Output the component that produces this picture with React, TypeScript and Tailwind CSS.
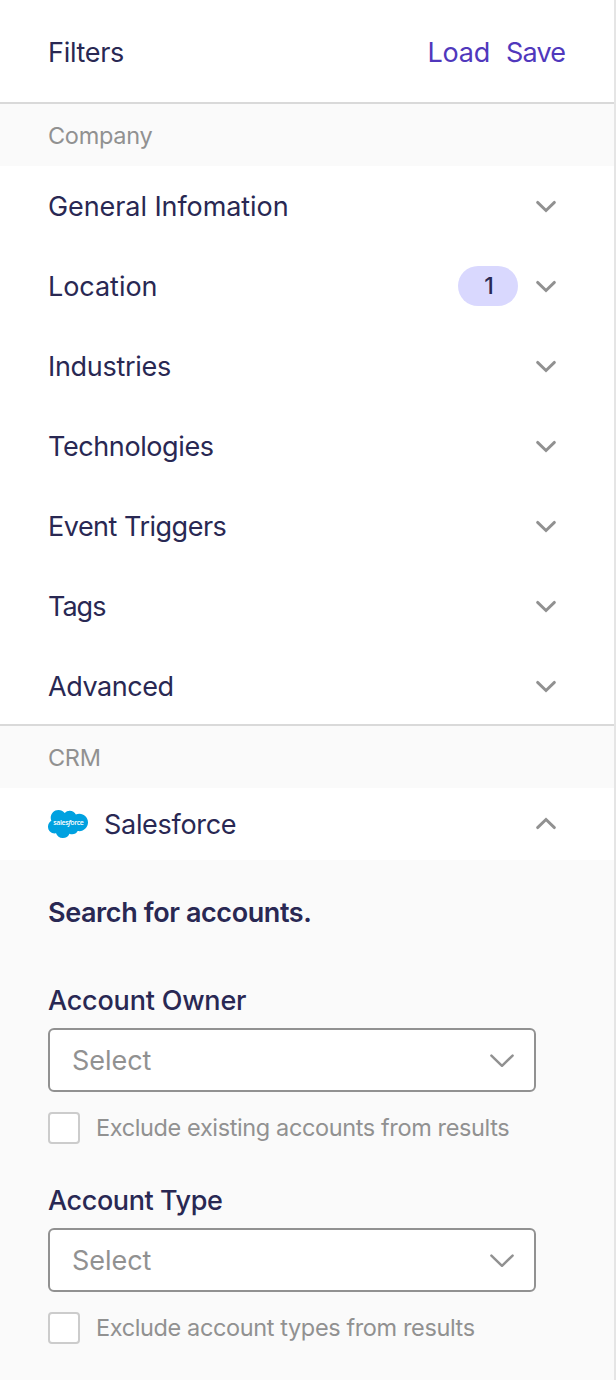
import clsx from "clsx";

const companyFilters = [
  { label: "General Infomation", tracking: "tracking-[-0.08px]" },
  { label: "Location", tracking: "tracking-[-0.05px]", count: 1 },
  { label: "Industries", tracking: "tracking-[-0.3px]" },
  { label: "Technologies", tracking: "tracking-[-0.4px]" },
  { label: "Event Triggers", tracking: "tracking-[-0.5px]" },
  { label: "Tags", tracking: "tracking-[-1px]" },
  { label: "Advanced", tracking: "tracking-[-0.45px]" },
];

const accountFields = [
  {
    label: "Account Owner",
    exclude: "Exclude existing accounts from results",
    tracking: "tracking-[-0.2px]",
  },
  {
    label: "Account Type",
    exclude: "Exclude account types from results",
    tracking: "tracking-[-0.4px]",
  },
];

function Chevron({ up = false }: { up?: boolean }) {
  return (
    <svg
      viewBox="0 0 24 24"
      className={clsx("size-6 fill-none stroke-[#919191] stroke-[2.9]", up && "rotate-180")}
      strokeLinecap="round"
    >
      <path d="M3.6 8.4 12 16.5l8.4-8.1" />
    </svg>
  );
}

function SalesforceLogo() {
  return (
    <svg viewBox="0 0 40 28" className="h-7 w-10">
      <path
        transform="scale(1.6667) translate(0 -3.6)"
        fill="#00a1e0"
        d="M10.006 5.415a4.195 4.195 0 013.045-1.306c1.56 0 2.954.9 3.69 2.205.63-.3 1.35-.45 2.1-.45 2.85 0 5.159 2.34 5.159 5.22s-2.31 5.22-5.176 5.22c-.345 0-.69-.044-1.02-.104a3.75 3.75 0 01-3.3 1.95c-.6 0-1.155-.15-1.65-.375A4.314 4.314 0 018.88 20.4a4.302 4.302 0 01-4.05-2.82c-.27.062-.54.076-.825.076-2.204 0-4.005-1.8-4.005-4.05 0-1.5.811-2.805 2.01-3.51-.255-.57-.39-1.2-.39-1.846 0-2.58 2.1-4.65 4.65-4.65 1.53 0 2.85.705 3.72 1.8"
      />
      <text x="5.3" y="15.2" textLength="30.6" fontSize="7" fontWeight="600" fill="#fff" fontFamily="Open Sans, sans-serif">
        sales<tspan fontStyle="italic">f</tspan>orce
      </text>
    </svg>
  );
}

function SectionHeading({ children }: { children: string }) {
  return (
    <div className="flex h-16 items-center border-t-2 border-[#d9d9d9] bg-[#fafafa] pt-0.5 pl-12">
      <h2 className="text-[23.5px] tracking-[-0.3px] text-[#919191]">{children}</h2>
    </div>
  );
}

export default function App() {
  return (
    <aside className="h-[1380px] w-[616px] overflow-hidden border-r-2 border-[#e5e5e5] bg-white font-['Inter',sans-serif] text-[27px] leading-none text-[#292853]">
      <header className="flex h-[102px] items-center justify-between pt-0.5 pr-[49px] pl-12">
        <h1 className="tracking-[-0.3px]">Filters</h1>
        <div className="flex gap-4 text-[#5038bc]">
          <button className="tracking-[-0.2px]">Load</button>
          <button className="tracking-[-0.9px]">Save</button>
        </div>
      </header>

      <section>
        <SectionHeading>Company</SectionHeading>
        <ul className="h-[558px]">
          {companyFilters.map((filter) => (
            <li key={filter.label} className="flex h-20 items-center pr-14 pl-12">
              <span className={filter.tracking}>{filter.label}</span>
              <div className="ml-auto flex items-center gap-4">
                {filter.count && (
                  <span className="flex h-10 w-15 items-center justify-center rounded-full bg-[#d9d8fe] pl-0.5 text-[23px] font-medium">
                    {filter.count}
                  </span>
                )}
                <Chevron />
              </div>
            </li>
          ))}
        </ul>
      </section>

      <section>
        <SectionHeading>CRM</SectionHeading>
        <div className="flex h-[72px] items-center gap-4 pr-14 pl-12">
          <SalesforceLogo />
          <span className="tracking-[-0.3px]">Salesforce</span>
          <div className="ml-auto">
            <Chevron up />
          </div>
        </div>

        <div className="h-[520px] bg-[#fafafa] px-12 pt-[38px]">
          <h3 className="h-[88px] leading-[30px] font-semibold tracking-[-0.4px]">Search for accounts.</h3>
          <div className="flex flex-col gap-[42px]">
            {accountFields.map((field) => (
              <div key={field.label}>
                <p className={clsx("h-[42px] leading-[30px] font-medium", field.tracking)}>{field.label}</p>
                <button className="flex h-16 w-[488px] items-center justify-between rounded-md border-2 border-[#919191] bg-white pr-5 pl-[22px] text-[#919191]">
                  <span className="tracking-[-0.05px]">Select</span>
                  <svg viewBox="0 0 24 24" className="size-6 fill-none stroke-current stroke-[2.5]" strokeLinecap="round" strokeLinejoin="round">
                    <path d="M1.4 7.6 12 17.8 22.6 7.6" />
                  </svg>
                </button>
                <label className="mt-5 flex items-center gap-4 text-[23.5px] tracking-[-0.38px] text-[#919191]">
                  <input type="checkbox" className="size-8 appearance-none rounded-[4px] border-2 border-[#ccc] bg-white" />
                  <span>{field.exclude}</span>
                </label>
              </div>
            ))}
          </div>
        </div>
      </section>
    </aside>
  );
}
